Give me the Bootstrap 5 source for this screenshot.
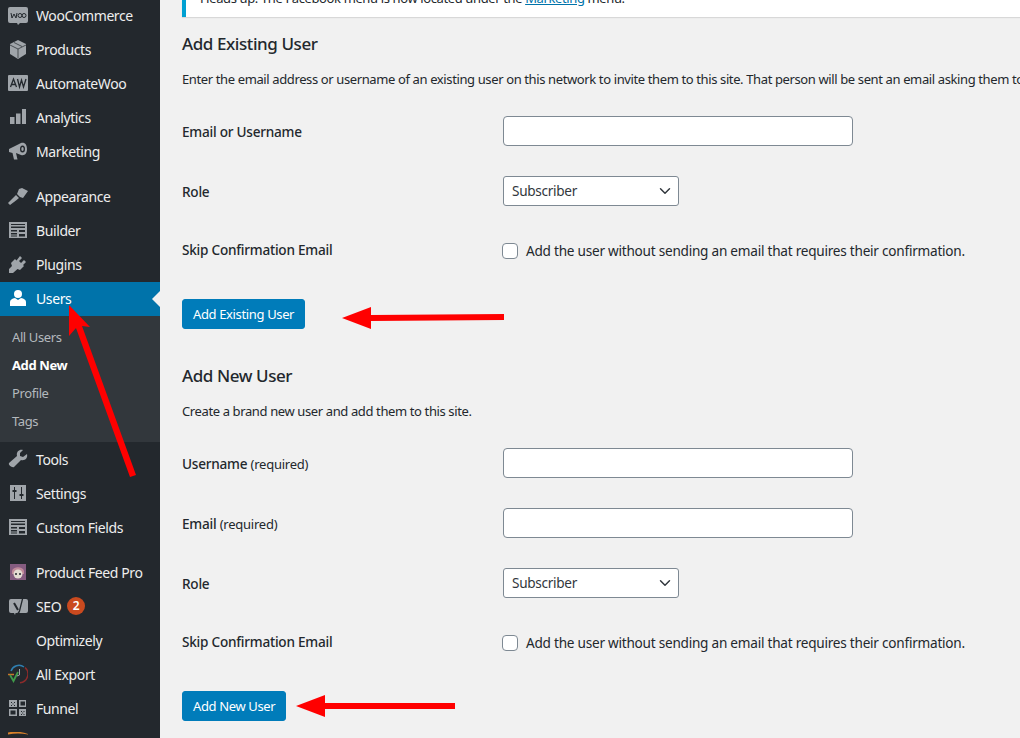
<!DOCTYPE html>
<html lang="en">
<head>
  <meta charset="UTF-8">
  <title>Add New User</title>
  <meta name="viewport" content="width=device-width, initial-scale=1">
  <link href="https://cdn.jsdelivr.net/npm/bootstrap@5.3.3/dist/css/bootstrap.min.css" rel="stylesheet">
  <style>
    html, body { height: 738px; overflow: hidden; }
    body { background: #f1f1f1; color: #23282d; font-family: "Noto Sans", "Liberation Sans", sans-serif; font-size: 13px; letter-spacing: -.38px; position: relative; }
    .wp-shell { height: 738px; overflow: hidden; }
    .wp-side { width: 160px; flex: none; background: #23282d; overflow: hidden; }
    .wp-item { height: 34px; padding-bottom: 2px; color: #eee; font-size: 14px; letter-spacing: -.4px; text-decoration: none; position: relative; }
    .wp-item.first { height: 33px; }
    .wp-item svg, .wp-item .ico-box { width: 20px; height: 20px; margin: 0 8px; flex: none; }
    .wp-item.active { background: #0073aa; color: #fff; }
    .wp-item.active::after { content: ""; position: absolute; right: 0; top: 9px; border: 8px solid transparent; border-right-color: #f1f1f1; border-left: 0; }
    .wp-gap { height: 11px; }
    .wp-sub { background: #32373c; padding: 7px 0 7px; margin-bottom: 1px; }
    .wp-sub a { display: block; height: 28px; line-height: 28px; padding-left: 12px; color: #b4b9be; font-size: 13px; letter-spacing: -.4px; text-decoration: none; }
    .wp-sub a.on { color: #fff; font-weight: 700; }
    .wp-count { width: 18px; height: 18px; border-radius: 50%; background: #ca4a1f; color: #fff; font-size: 12px; font-weight: 600; line-height: 18px; text-align: center; margin-left: 6px; letter-spacing: 0; }
    .wp-main { padding-left: 22px; flex: 1; min-width: 0; overflow: hidden; }
    .wp-notice { height: 17px; background: #fff; border-left: 4px solid #00a0d2; box-shadow: 0 1px 1px rgba(0,0,0,.1); padding-left: 14px; overflow: hidden; white-space: nowrap; margin-bottom: 17px; }
    .wp-notice p { margin: -12px 0 0; line-height: 20px; }
    .wp-notice a { color: #0073aa; }
    .wp-title { font-size: 17px; font-weight: 500; line-height: 20px; margin: 0 0 15px; color: #23282d; letter-spacing: -.42px; }
    .wp-title.next { margin-top: 37px; }
    .wp-intro { margin: 0 0 12px; line-height: 20px; white-space: nowrap; }
    .wp-label { width: 320px; flex: none; font-size: 13.6px; font-weight: 500; line-height: 20px; letter-spacing: -.24px; padding-top: 1px; }
    .wp-label span { font-weight: 400; font-size: 13px; }
    .wp-row { height: 60px; }
    .wp-row.skip { height: 59px; margin-bottom: 19px; font-size: 13.6px; letter-spacing: -.24px; }
    .wp-row.skip .wp-label { padding-top: 0; margin-top: -1px; }
    .wp-row.skip .wp-note { padding-top: 1px; }
    .wp-field.form-control { width: 350px; height: 30px; min-height: 30px; padding: 0 8px; margin-left: 1px; border: 1px solid #7e8993; border-radius: 4px; box-shadow: none; }
    .wp-role.form-select { width: 176px; height: 30px; min-height: 30px; padding: 0 24px 0 8px; margin-left: 1px; font-size: 13.6px; color: #32373c; border: 1px solid #7e8993; border-radius: 3px; background-position: right 5px center; background-size: 16px 12px; letter-spacing: -.3px; }
    .wp-check.form-check-input { width: 16px; height: 16px; margin: 0 8px 0 0; border: 1px solid #7e8993; border-radius: 4px; background-color: #fff; flex: none; }
    .wp-btn.btn { height: 30px; padding: 0 10px; font-size: 13px; line-height: 28px; background: #007cba; border: 1px solid #007cba; border-radius: 3px; color: #fff; letter-spacing: -.36px; display: block; }
    .wp-arrows { position: absolute; left: 0; top: 0; pointer-events: none; }
  </style>
</head>
<body>
  <div class="wp-shell d-flex">
    <div class="wp-side">
      <a class="wp-item first d-flex align-items-center" href="#">
        <svg viewBox="0 0 20 20"><path fill="#a0a5aa" d="M2 1h16a2 2 0 0 1 2 2v12a2 2 0 0 1-2 2h-6l-2 2-1-2H2a2 2 0 0 1-2-2V3a2 2 0 0 1 2-2z"/><path fill="none" stroke="#23282d" d="M3 7l1 5 2-4 2 4 1-5"/><circle cx="12" cy="9.500" r="2" fill="none" stroke="#23282d"/><circle cx="16" cy="9.500" r="2" fill="none" stroke="#23282d"/></svg>WooCommerce</a>
      <a class="wp-item d-flex align-items-center" href="#">
        <svg viewBox="0 0 20 20"><path fill="#a0a5aa" d="M10 1l8 4v10l-8 5-8-5V5z"/><path fill="none" stroke="#23282d" stroke-width=".7" d="M2 6l8 4 8-4M10 10v9M6 3.500l8 4"/></svg>Products</a>
      <a class="wp-item d-flex align-items-center" href="#">
        <svg viewBox="0 0 20 20"><rect x="0" y="2" width="20" height="16" rx="1" fill="#a0a5aa"/><path fill="none" stroke="#23282d" stroke-width="1.300" d="M2.500 14l3-8 3 8M3.500 11.500h4M9.500 6l2 8 2-7 2 7 2.500-8"/></svg>AutomateWoo</a>
      <a class="wp-item d-flex align-items-center" href="#">
        <svg viewBox="0 0 20 20"><path fill="#a0a5aa" d="M2 10h4.500v7H2zM8 6.500h4.500V17H8zM14 2h4v15h-4z"/></svg>Analytics</a>
      <a class="wp-item d-flex align-items-center" href="#">
        <svg viewBox="0 0 20 20"><path fill="#a0a5aa" d="M1 8l12-6c4-1 6 2 6 6s-2 7-6 6l-5-2 1.500 6.500H6L4.500 12 1 11z"/><ellipse cx="14.500" cy="8" rx="2.500" ry="3.500" fill="#23282d"/><ellipse cx="14.500" cy="8" rx="1.200" ry="2" fill="#a0a5aa"/></svg>Marketing</a>
      <div class="wp-gap"></div>
      <a class="wp-item d-flex align-items-center" href="#">
        <svg viewBox="0 0 20 20"><path fill="#a0a5aa" d="M11 3l3-1 6 3-5 7-3-1-3-3zM8 9l3 3-3 2.500L2 19l-2-2z"/></svg>Appearance</a>
      <a class="wp-item d-flex align-items-center" href="#">
        <svg viewBox="0 0 20 20"><path fill="#a0a5aa" fill-rule="evenodd" d="M1 2h18v16H1zM3 4v1h14V4zM3 6.500V8h14V6.500zM3 10v1.500h6V10zM11 10v2h6v-2zM3 13v1.500h6V13zM11 14v2.500h6V14zM3 15.500v1h6v-1z"/></svg>Builder</a>
      <a class="wp-item d-flex align-items-center" href="#">
        <svg viewBox="0 0 20 20"><path fill="#a0a5aa" d="M12 2l2 2-3 3 2 2 3-3 2 2-3 3 1 1-4 4-2.500-1L5 19H1v-4l3-3-1-3 4-4 1.500 1.500z"/></svg>Plugins</a>
      <a class="wp-item active d-flex align-items-center" href="#">
        <svg viewBox="0 0 20 20"><circle cx="10" cy="6" r="4" fill="#fff"/><path fill="#fff" d="M2 18v-4c0-2 2-3.500 5-4l3 2 3-2c3 .5 5 2 5 4v4z"/></svg>Users</a>
      <div class="wp-sub">
        <a href="#">All Users</a>
        <a class="on" href="#">Add New</a>
        <a href="#">Profile</a>
        <a href="#">Tags</a>
      </div>
      <a class="wp-item d-flex align-items-center" href="#">
        <svg viewBox="0 0 20 20"><path fill="#a0a5aa" d="M19 5l-4 3-3-1V4l3-3c-3-1-7 1-6 6L1 14c-1 2 3 5 5 4l7-7c4 1 7-2 6-6z"/></svg>Tools</a>
      <a class="wp-item d-flex align-items-center" href="#">
        <svg viewBox="0 0 20 20"><path fill="#a0a5aa" fill-rule="evenodd" d="M2 2h16v16H2zM6 4v3H4.500v2H6v7h1V9h1.500V7H7V4zM13 4v7h-1.500v2H13v3h1v-3h1.500v-2H14V4z"/></svg>Settings</a>
      <a class="wp-item d-flex align-items-center" href="#">
        <svg viewBox="0 0 20 20"><path fill="#a0a5aa" fill-rule="evenodd" d="M1 2h18v16H1zM3 4v1h14V4zM3 6.500V8h14V6.500zM3 10v1.500h6V10zM11 10v2h6v-2zM3 13v1.500h6V13zM11 14v2.500h6V14zM3 15.500v1h6v-1z"/></svg>Custom Fields</a>
      <div class="wp-gap"></div>
      <a class="wp-item d-flex align-items-center" href="#">
        <svg viewBox="0 0 20 20"><rect x="2" y="2" width="16" height="16" fill="#855c80"/><path fill="#c08a9a" d="M4 9c1-5 11-5 12 0v3H4z"/><circle cx="10" cy="12" r="4.500" fill="#e4dcd2"/><circle cx="8" cy="12" r="1" fill="#23282d"/><circle cx="12" cy="12" r="1" fill="#23282d"/></svg>Product Feed Pro</a>
      <a class="wp-item d-flex align-items-center" href="#">
        <svg viewBox="0 0 20 20"><path fill="#a0a5aa" d="M3 3h15a2 2 0 0 1 2 2v10a2 2 0 0 1-2 2H8l-1 2-1-2H3a2 2 0 0 1-2-2V5a2 2 0 0 1 2-2z"/><path fill="none" stroke="#23282d" stroke-width="1.300" d="M15.500 -1l-4 16c-.5 2-2 3-4 3"/><path fill="none" stroke="#23282d" stroke-width="2" d="M6 7l4 7"/></svg>SEO<span class="wp-count">2</span></a>
      <a class="wp-item d-flex align-items-center" href="#"><span class="ico-box"></span>Optimizely</a>
      <a class="wp-item d-flex align-items-center" href="#">
        <svg viewBox="0 0 20 20" fill="none"><path stroke="#2f7fb0" stroke-width="1.500" d="M3 7a8.500 8.500 0 0 1 13-4"/><path stroke="#8c2b2b" stroke-width="1.500" d="M17 3.500a8.800 8.800 0 0 1-5 15.300"/><path stroke="#c9762a" stroke-width="1.500" d="M0 10.500h6"/><path stroke="#3f9a4a" stroke-width="1.800" d="M2 11l3.500 6L10 8"/><path stroke="#a0a5aa" d="M11.500 5v6l-2.500 1"/></svg>All Export</a>
      <a class="wp-item d-flex align-items-center" href="#">
        <svg viewBox="0 0 20 20"><path fill="#a0a5aa" fill-rule="evenodd" d="M1 2h8v7H1zM3 4v1h1V4zM6 4v1h1V4zM4.500 5.500v1h1v-1zM3 7v1h1V7zM6 7v1h1V7zM11 2h7v7h-7zM12.500 3.500v4H17v-4zM1 11h8v7H1zM2.500 12.500v4H7.500v-4zM11 11h7v7h-7zM13 13v1h1v-1zM15.500 13v1h1v-1zM14.200 14.500v1h1v-1zM13 16v1h1v-1zM15.500 16v1h1v-1z"/></svg>Funnel</a>
      <a class="wp-item d-flex align-items-center" href="#">
        <svg viewBox="0 0 20 20"><path fill="#d9822b" d="M-2 1C5 -1 14 -1 22 3 14 1 6 1 -2 3z"/></svg></a>
    </div>
    <div class="wp-main">
      <div class="wp-notice"><p>Heads up: The Facebook menu is now located under the <a href="#">Marketing</a> menu.</p></div>
      <h2 class="wp-title">Add Existing User</h2>
      <p class="wp-intro">Enter the email address or username of an existing user on this network to invite them to this site. That person will be sent an email asking them to confirm the invite.</p>
      <div class="wp-row d-flex align-items-center"><label class="wp-label">Email or Username</label><input class="wp-field form-control" type="text"></div>
      <div class="wp-row d-flex align-items-center"><label class="wp-label">Role</label><select class="wp-role form-select"><option>Subscriber</option></select></div>
      <div class="wp-row skip d-flex align-items-center"><label class="wp-label">Skip Confirmation Email</label><input class="wp-check form-check-input" type="checkbox"><span class="wp-note">Add the user without sending an email that requires their confirmation.</span></div>
      <button class="wp-btn btn" type="button">Add Existing User</button>

      <h2 class="wp-title next">Add New User</h2>
      <p class="wp-intro">Create a brand new user and add them to this site.</p>
      <div class="wp-row d-flex align-items-center"><label class="wp-label">Username <span>(required)</span></label><input class="wp-field form-control" type="text"></div>
      <div class="wp-row d-flex align-items-center"><label class="wp-label">Email <span>(required)</span></label><input class="wp-field form-control" type="text"></div>
      <div class="wp-row d-flex align-items-center"><label class="wp-label">Role</label><select class="wp-role form-select"><option>Subscriber</option></select></div>
      <div class="wp-row skip d-flex align-items-center"><label class="wp-label">Skip Confirmation Email</label><input class="wp-check form-check-input" type="checkbox"><span class="wp-note">Add the user without sending an email that requires their confirmation.</span></div>
      <button class="wp-btn btn" type="button">Add New User</button>
    </div>
  </div>
  <svg class="wp-arrows" width="1020" height="738" viewBox="0 0 1020 738">
    <path fill="#f00" d="M69 305l21 22-8-1 54 149-6 2-54-149-7 8z"/>
    <path fill="#f00" d="M342 318l29-11v8l133-1v6l-133 1v8z"/>
    <path fill="#f00" d="M296 706l29-11v8h130v6H325v8z"/>
  </svg>
</body>
</html>
